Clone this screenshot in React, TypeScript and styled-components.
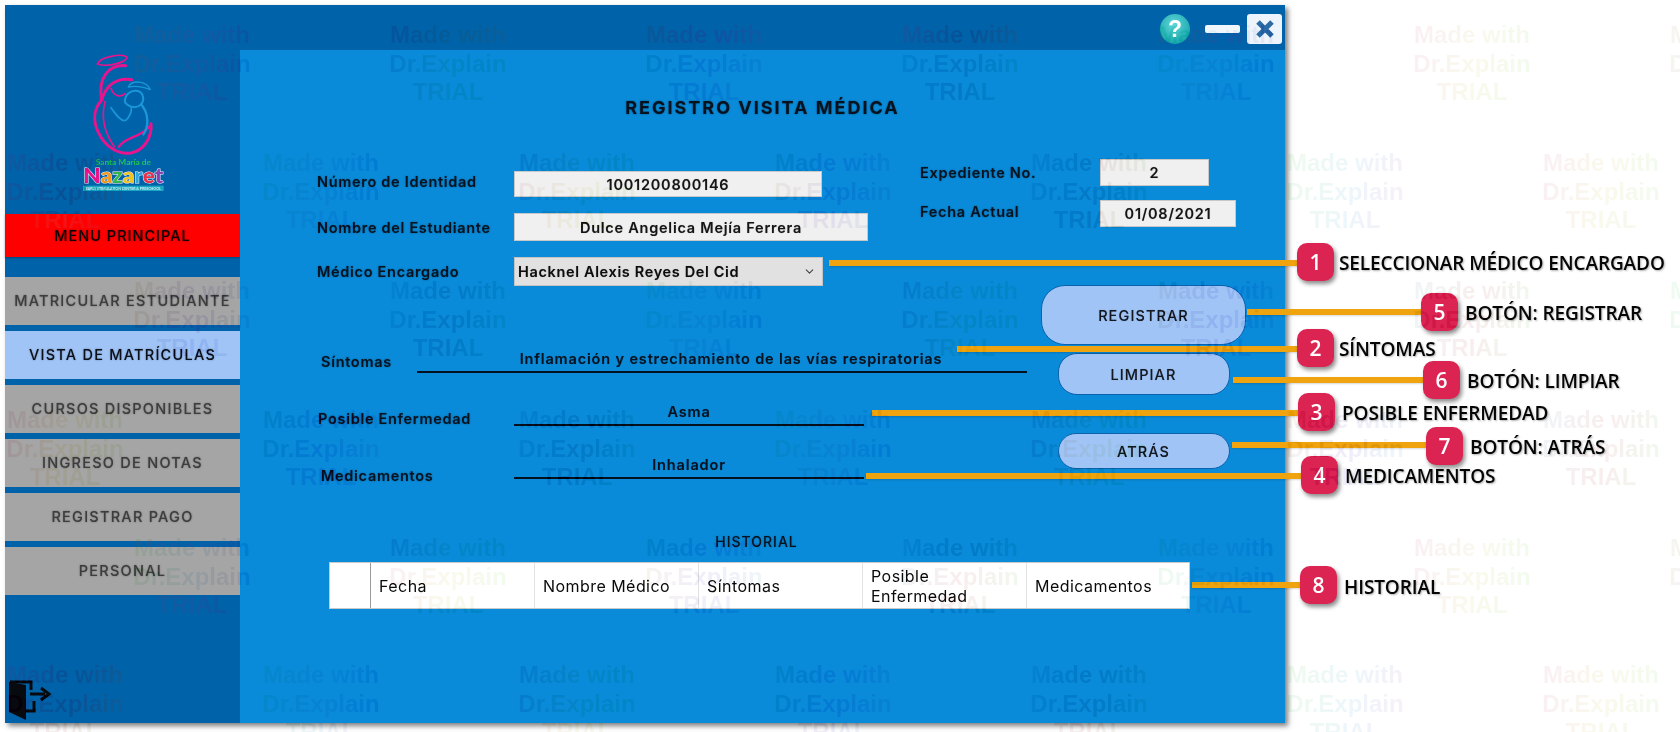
import React from "react";
import styled, { createGlobalStyle } from "styled-components";
import { ChevronDown } from "lucide-react";

const Global = createGlobalStyle`
  html, body { margin: 0; padding: 0; background: #fff; }
  #root { width: 1680px; height: 732px; overflow: hidden; }
`;

const Page = styled.div`
  position: relative;
  width: 1680px;
  height: 732px;
  overflow: hidden;
  background: #fff;
  isolation: isolate;
  font-family: Inter, "Open Sans", "DejaVu Sans", sans-serif;
  padding: 5px 0 0 5px;
  box-sizing: border-box;
`;

const Window = styled.div`
  display: flex;
  width: 1280px;
  height: 718px;
  background: #0063a9;
  box-shadow: 3px 3px 5px rgba(0, 0, 0, 0.5);
`;

const Sidebar = styled.aside`
  display: flex;
  flex-direction: column;
  width: 235px;
  flex: none;
`;

const LogoSlot = styled.div`
  height: 209px;
  padding: 40px 0 0 70px;
  box-sizing: border-box;
`;

const MenuHeading = styled.div`
  display: flex;
  align-items: center;
  justify-content: center;
  height: 43px;
  background: #fe0000;
  color: #140000;
  font-size: 14.5px;
  font-weight: 500;
  letter-spacing: 1px;
  text-shadow: 0 0 2px rgba(60, 0, 0, 0.6);
  box-shadow: 0 1px 2px rgba(0, 0, 0, 0.3);
`;

const NavList = styled.nav`
  display: flex;
  flex-direction: column;
  gap: 6px;
  margin-top: 20px;
`;

const NavItem = styled.div<{ $active?: boolean }>`
  display: flex;
  align-items: center;
  justify-content: center;
  height: 48px;
  padding-bottom: 2px;
  box-sizing: border-box;
  background: ${(p) => (p.$active ? "#a0c4f6" : "#a6a5a5")};
  color: ${(p) => (p.$active ? "#0b0f18" : "#3d3d3d")};
  font-size: 14.5px;
  font-weight: 500;
  letter-spacing: 1.25px;
  text-shadow: 0 0 2px rgba(0, 0, 0, 0.35);
`;

const ExitLink = styled.div`
  margin: auto 0 1px 3px;
  line-height: 0;
`;

const Main = styled.div`
  display: flex;
  flex-direction: column;
  flex: 1;
  min-width: 0;
`;

const TitleBar = styled.header`
  display: flex;
  align-items: center;
  justify-content: flex-end;
  height: 45px;
  flex: none;
  padding: 3px 3px 0 0;
  box-sizing: border-box;
`;

const HelpButton = styled.div`
  display: flex;
  align-items: center;
  justify-content: center;
  width: 30px;
  height: 30px;
  border-radius: 50%;
  background: radial-gradient(circle at 45% 35%, #5fd6d8, #1aa7ad 75%);
  color: #fff;
  font-family: "Liberation Sans", sans-serif;
  font-size: 23px;
  font-weight: 700;
`;

const MinimizeButton = styled.div`
  width: 35px;
  height: 8px;
  margin: 0 7px 0 15px;
  border-radius: 2px;
  background: #f2f7fc;
`;

const CloseButton = styled.div`
  display: flex;
  align-items: center;
  justify-content: center;
  width: 35px;
  height: 30px;
  border-radius: 3px;
  background: #edf4fb;
`;

const Panel = styled.main`
  flex: 1;
  display: flex;
  flex-direction: column;
  background: #0a8bd9;
`;

const PageTitle = styled.h1`
  margin: 46px 0 0;
  height: 24px;
  line-height: 24px;
  text-align: center;
  color: #07121f;
  font-size: 18px;
  font-weight: 700;
  letter-spacing: 2px;
  text-shadow: 0 0 2px rgba(0, 0, 0, 0.45);
`;

const UpperForm = styled.section`
  display: flex;
  height: 126px;
  margin: 39px 0 0;
  padding-left: 77px;
`;

const IdentityFields = styled.div`
  display: flex;
  flex-direction: column;
  gap: 16px;
  width: 603px;
  padding-top: 12px;
  box-sizing: border-box;
`;

const FieldRow = styled.div`
  display: flex;
  align-items: center;
`;

const FieldLabel = styled.span<{ $width: number; $lift?: number }>`
  flex: none;
  width: ${(p) => p.$width}px;
  margin-bottom: ${(p) => p.$lift ?? 0}px;
  color: #06121f;
  font-size: 14.5px;
  font-weight: 600;
  letter-spacing: 0.7px;
  text-shadow: 0 0 2px rgba(0, 0, 0, 0.4);
`;

const ValueBox = styled.div<{ $width: number; $height: number }>`
  display: flex;
  align-items: center;
  justify-content: center;
  width: ${(p) => p.$width}px;
  height: ${(p) => p.$height}px;
  box-sizing: border-box;
  background: #f0f0f0;
  border: 1px solid #c8c8c8;
  color: #151515;
  font-size: 14.5px;
  font-weight: 600;
  letter-spacing: 0.75px;
  text-shadow: 0 0 1px rgba(0, 0, 0, 0.3);
`;

const SelectBox = styled.div`
  display: flex;
  align-items: center;
  justify-content: space-between;
  width: 309px;
  height: 29px;
  padding: 0 6px 0 3px;
  box-sizing: border-box;
  background: #e1e1e1;
  border: 1px solid #c4c4c4;
  color: #0d0d0d;
  font-size: 14.5px;
  font-weight: 600;
  letter-spacing: 0.65px;
  text-shadow: 0 0 1px rgba(0, 0, 0, 0.3);
`;

const RecordFields = styled.div`
  display: flex;
  flex-direction: column;
  gap: 14px;
`;

const LowerForm = styled.section`
  display: flex;
  height: 195px;
  margin-top: 0;
  padding-left: 77px;
`;

const NotesColumn = styled.div`
  display: flex;
  flex-direction: column;
  gap: 26px;
  width: 724px;
  padding-top: 61px;
  box-sizing: border-box;
`;

const NoteRow = styled.div`
  display: flex;
  align-items: flex-end;
  height: 27px;
`;

const NoteLabel = styled.span<{ $indent: number; $width: number; $drop: number }>`
  flex: none;
  width: ${(p) => p.$width}px;
  margin-left: ${(p) => p.$indent}px;
  margin-bottom: ${(p) => p.$drop}px;
  line-height: 20px;
  color: #06121f;
  font-size: 14.5px;
  font-weight: 600;
  letter-spacing: 0.7px;
  text-shadow: 0 0 2px rgba(0, 0, 0, 0.4);
`;

const NoteValue = styled.div<{ $width: number; $pad?: number }>`
  width: ${(p) => p.$width}px;
  height: 27px;
  line-height: 25px;
  padding-left: ${(p) => p.$pad ?? 0}px;
  box-sizing: border-box;
  border-bottom: 2px solid #04121f;
  text-align: center;
  white-space: nowrap;
  color: #06121f;
  font-size: 14.5px;
  font-weight: 600;
  letter-spacing: 0.85px;
  text-shadow: 0 0 1px rgba(0, 0, 0, 0.3);
`;

const ActionColumn = styled.div`
  display: flex;
  flex-direction: column;
  align-items: center;
  width: 205px;
`;

const ActionButton = styled.div<{ $width: number; $height: number; $radius: number; $after: number }>`
  display: flex;
  align-items: center;
  justify-content: center;
  flex: none;
  width: ${(p) => p.$width}px;
  height: ${(p) => p.$height}px;
  margin-bottom: ${(p) => p.$after}px;
  box-sizing: border-box;
  border: 1.5px solid #0b62ad;
  border-radius: ${(p) => p.$radius}px;
  background: #a0c4f6;
  color: #14181f;
  font-size: 14.5px;
  font-weight: 500;
  letter-spacing: 1.1px;
  text-shadow: 0 0 1px rgba(0, 0, 0, 0.3);
`;

const HistoryTitle = styled.h2`
  margin: 52px 0 0;
  height: 20px;
  line-height: 20px;
  width: 1033px;
  text-align: center;
  color: #07121f;
  font-size: 14px;
  font-weight: 500;
  letter-spacing: 1px;
  text-shadow: 0 0 2px rgba(0, 0, 0, 0.3);
`;

const HistoryTable = styled.div`
  display: grid;
  grid-template-columns: 41px repeat(5, 164px);
  width: 861px;
  height: 47px;
  margin: 10px 0 0 89px;
  box-sizing: border-box;
  background: #fff;
  border: 1px solid #c9c9c9;
`;

const HeaderCell = styled.div<{ $strong?: boolean }>`
  display: flex;
  align-items: center;
  padding: 0 8px;
  border-right: 1px solid ${(p) => (p.$strong ? "#9a9a9a" : "#e2e2e2")};
  color: #0a0a0a;
  font-size: 16px;
  line-height: 20px;
  letter-spacing: 0.45px;
  &:last-child { border-right: 0; }
`;

const AnnotationLine = styled.div<{ $x: number; $to: number; $y: number }>`
  position: absolute;
  left: ${(p) => p.$x}px;
  top: ${(p) => p.$y - 3}px;
  width: ${(p) => p.$to - p.$x}px;
  height: 6px;
  background: #efa30f;
  box-shadow: 0 1px 2px rgba(0, 0, 0, 0.15);
`;

const Badge = styled.div<{ $x: number; $y: number }>`
  position: absolute;
  left: ${(p) => p.$x}px;
  top: ${(p) => p.$y}px;
  display: flex;
  align-items: center;
  justify-content: center;
  width: 37px;
  height: 38px;
  border-radius: 10px;
  background: #dc2453;
  color: #fff;
  font-family: "Open Sans", sans-serif;
  font-size: 21px;
  font-weight: 600;
  box-shadow: 2px 3px 4px rgba(0, 0, 0, 0.45);
`;

const Caption = styled.div<{ $x: number; $y: number }>`
  position: absolute;
  left: ${(p) => p.$x}px;
  top: ${(p) => p.$y - 12}px;
  height: 24px;
  line-height: 24px;
  white-space: nowrap;
  color: #060606;
  font-family: "Open Sans", sans-serif;
  font-size: 19px;
  font-weight: 600;
  letter-spacing: -0.1px;
  text-shadow: 1px 1px 2px rgba(0, 0, 0, 0.3);
`;

const WatermarkLayer = styled.div`
  position: absolute;
  inset: 0;
  z-index: 5;
  pointer-events: none;
  mix-blend-mode: difference;
`;

const Mark = styled.div<{ $x: number; $y: number; $tone: number }>`
  position: absolute;
  left: ${(p) => p.$x - 70}px;
  top: ${(p) => p.$y}px;
  width: 140px;
  text-align: center;
  font-family: "Liberation Sans", sans-serif;
  font-size: 24px;
  font-weight: 700;
  line-height: 28.5px;
  white-space: nowrap;
  color: transparent;
  background-image: ${(p) => TONES[p.$tone % TONES.length]};
  -webkit-background-clip: text;
  background-clip: text;
`;

const TONES = [
  "linear-gradient(100deg, rgb(16,3,18), rgb(18,9,4) 55%, rgb(5,18,8))",
  "linear-gradient(100deg, rgb(5,18,9), rgb(5,6,19) 50%, rgb(16,4,16))",
  "linear-gradient(100deg, rgb(6,8,19), rgb(15,18,5) 50%, rgb(18,6,6))",
  "linear-gradient(100deg, rgb(18,8,5), rgb(6,18,18) 50%, rgb(18,3,16))",
];

const marks: { x: number; y: number; tone: number }[] = [];
[21, 149, 277, 406, 534, 661].forEach((y, row) => {
  const start = row % 2 === 0 ? 192 : 65;
  for (let col = 0; col < 7; col++) {
    marks.push({ x: start + col * 256, y, tone: row * 3 + col });
  }
});

const annotations = [
  { n: 1, label: "SELECCIONAR MÉDICO ENCARGADO", from: 829, lineY: 263, bx: 1297, by: 243, tx: 1339, ty: 263 },
  { n: 5, label: "BOTÓN: REGISTRAR", from: 1247, lineY: 312, bx: 1421, by: 293, tx: 1465, ty: 313 },
  { n: 2, label: "SÍNTOMAS", from: 957, lineY: 349, bx: 1297, by: 329, tx: 1339, ty: 349 },
  { n: 6, label: "BOTÓN: LIMPIAR", from: 1233, lineY: 380, bx: 1423, by: 361, tx: 1467, ty: 381 },
  { n: 3, label: "POSIBLE ENFERMEDAD", from: 872, lineY: 413, bx: 1298, by: 393, tx: 1342, ty: 413 },
  { n: 7, label: "BOTÓN: ATRÁS", from: 1232, lineY: 445, bx: 1426, by: 427, tx: 1470, ty: 447 },
  { n: 4, label: "MEDICAMENTOS", from: 866, lineY: 476, bx: 1301, by: 456, tx: 1345, ty: 476 },
  { n: 8, label: "HISTORIAL", from: 1192, lineY: 585, bx: 1300, by: 566, tx: 1344, ty: 587 },
];

const navItems = ["MATRICULAR ESTUDIANTE", "VISTA DE MATRÍCULAS", "CURSOS DISPONIBLES", "INGRESO DE NOTAS", "REGISTRAR PAGO", "PERSONAL"];

function Logo() {
  return (
    <svg width="100" height="155" viewBox="0 0 300 465" fill="none">
      <g stroke="#e8148e" strokeLinecap="round" strokeLinejoin="round">
        <path d="M67 57C75 36 140 24 156 36C158 50 100 68 67 57Z" strokeWidth="5" />
        <path d="M152 62C100 58 68 100 80 165C58 190 52 225 70 262C90 305 130 330 168 324C205 316 232 280 228 236" strokeWidth="9" />
        <path d="M80 165C95 115 130 98 170 104" strokeWidth="9" />
        <path d="M108 130C115 152 135 160 150 146" strokeWidth="5" />
        <path d="M90 170C78 215 88 262 118 305" strokeWidth="5" />
        <path d="M132 305C150 275 195 280 226 242" strokeWidth="7" />
      </g>
      <g stroke="#1b97d9" strokeLinecap="round" strokeLinejoin="round">
        <path d="M160 126C170 104 215 106 226 134C205 126 180 122 160 126Z" strokeWidth="4" />
        <path d="M150 172C148 148 168 134 188 138C205 142 210 165 198 178C186 190 165 190 150 172Z" strokeWidth="6" />
        <path d="M108 188C125 212 140 232 152 226C165 216 172 196 168 186" strokeWidth="5" />
        <path d="M198 178C222 205 222 245 205 268" strokeWidth="7" />
      </g>
      <text x="145" y="361" textAnchor="middle" fontFamily="Lato, sans-serif" fontSize="25" fontWeight="700" fill="#23c45c">Santa María de</text>
      <text x="145" y="413" textAnchor="middle" fontFamily="Lato, sans-serif" fontSize="63" fontWeight="900" stroke="#f4f0f8" strokeWidth="3" paintOrder="stroke" textLength="240" lengthAdjust="spacingAndGlyphs">
        <tspan fill="#e8148e">N</tspan><tspan fill="#f39a1e">a</tspan><tspan fill="#35b54a">z</tspan><tspan fill="#f2c31c">a</tspan><tspan fill="#2da5e0">r</tspan><tspan fill="#e8304a">e</tspan><tspan fill="#8c3fb0">t</tspan>
      </text>
      <rect x="24" y="422" width="242" height="16" fill="#19a6c2" />
      <text x="145" y="434" textAnchor="middle" fontFamily="Lato, sans-serif" fontSize="11" fontWeight="700" fill="#cdeef5" textLength="226">EARLY STIMULATION CENTER &amp; PRESCHOOL</text>
    </svg>
  );
}

function ExitIcon() {
  return (
    <svg width="44" height="42" viewBox="8 10 44 42" fill="none">
      <path d="M9 12L26 15V50L9 42Z" fill="#070b10" />
      <path d="M10 12H31V20M26 41H34V31" stroke="#070b10" strokeWidth="3" />
      <path d="M30 24H45M41 18L49 24L41 30" stroke="#070b10" strokeWidth="3" />
    </svg>
  );
}

function CloseGlyph() {
  return (
    <svg width="20" height="20" viewBox="0 0 20 20">
      <path d="M3 3L17 17M17 3L3 17" stroke="#2b6ca6" strokeWidth="5" />
    </svg>
  );
}

export default function App() {
  return (
    <Page>
      <Global />
      <Window>
        <Sidebar>
          <LogoSlot>
            <Logo />
          </LogoSlot>
          <MenuHeading>MENU PRINCIPAL</MenuHeading>
          <NavList>
            {navItems.map((item, i) => (
              <NavItem key={item} $active={i === 1}>{item}</NavItem>
            ))}
          </NavList>
          <ExitLink>
            <ExitIcon />
          </ExitLink>
        </Sidebar>
        <Main>
          <TitleBar>
            <HelpButton>?</HelpButton>
            <MinimizeButton />
            <CloseButton>
              <CloseGlyph />
            </CloseButton>
          </TitleBar>
          <Panel>
            <PageTitle>REGISTRO VISITA MÉDICA</PageTitle>
            <UpperForm>
              <IdentityFields>
                <FieldRow>
                  <FieldLabel $width={197} $lift={6}>Número de Identidad</FieldLabel>
                  <ValueBox $width={308} $height={26}>1001200800146</ValueBox>
                </FieldRow>
                <FieldRow>
                  <FieldLabel $width={197}>Nombre del Estudiante</FieldLabel>
                  <ValueBox $width={354} $height={28}>Dulce Angelica Mejía Ferrera</ValueBox>
                </FieldRow>
                <FieldRow>
                  <FieldLabel $width={197}>Médico Encargado</FieldLabel>
                  <SelectBox>
                    Hacknel Alexis Reyes Del Cid
                    <ChevronDown size={13} color="#444" />
                  </SelectBox>
                </FieldRow>
              </IdentityFields>
              <RecordFields>
                <FieldRow>
                  <FieldLabel $width={180}>Expediente No.</FieldLabel>
                  <ValueBox $width={109} $height={27}>2</ValueBox>
                </FieldRow>
                <FieldRow>
                  <FieldLabel $width={180} $lift={5}>Fecha Actual</FieldLabel>
                  <ValueBox $width={136} $height={27}>01/08/2021</ValueBox>
                </FieldRow>
              </RecordFields>
            </UpperForm>
            <LowerForm>
              <NotesColumn>
                <NoteRow>
                  <NoteLabel $indent={4} $width={96} $drop={1}>Síntomas</NoteLabel>
                  <NoteValue $width={610} $pad={18}>Inflamación y estrechamiento de las vías respiratorias</NoteValue>
                </NoteRow>
                <NoteRow>
                  <NoteLabel $indent={1} $width={196} $drop={-3}>Posible Enfermedad</NoteLabel>
                  <NoteValue $width={350}>Asma</NoteValue>
                </NoteRow>
                <NoteRow>
                  <NoteLabel $indent={4} $width={193} $drop={-7}>Medicamentos</NoteLabel>
                  <NoteValue $width={350}>Inhalador</NoteValue>
                </NoteRow>
              </NotesColumn>
              <ActionColumn>
                <ActionButton $width={205} $height={60} $radius={24} $after={8}>REGISTRAR</ActionButton>
                <ActionButton $width={172} $height={42} $radius={19} $after={38}>LIMPIAR</ActionButton>
                <ActionButton $width={172} $height={36} $radius={18} $after={0}>ATRÁS</ActionButton>
              </ActionColumn>
            </LowerForm>
            <HistoryTitle>HISTORIAL</HistoryTitle>
            <HistoryTable>
              <HeaderCell $strong />
              <HeaderCell>Fecha</HeaderCell>
              <HeaderCell>Nombre Médico</HeaderCell>
              <HeaderCell>Síntomas</HeaderCell>
              <HeaderCell>Posible<br />Enfermedad</HeaderCell>
              <HeaderCell>Medicamentos</HeaderCell>
            </HistoryTable>
          </Panel>
        </Main>
      </Window>
      {annotations.map((a) => (
        <React.Fragment key={a.n}>
          <AnnotationLine $x={a.from} $to={a.bx + 4} $y={a.lineY} />
          <Badge $x={a.bx} $y={a.by}>{a.n}</Badge>
          <Caption $x={a.tx} $y={a.ty}>{a.label}</Caption>
        </React.Fragment>
      ))}
      <WatermarkLayer>
        {marks.map((m, i) => (
          <Mark key={i} $x={m.x} $y={m.y} $tone={m.tone}>
            Made with
            <br />
            Dr.Explain
            <br />
            TRIAL
          </Mark>
        ))}
      </WatermarkLayer>
    </Page>
  );
}
